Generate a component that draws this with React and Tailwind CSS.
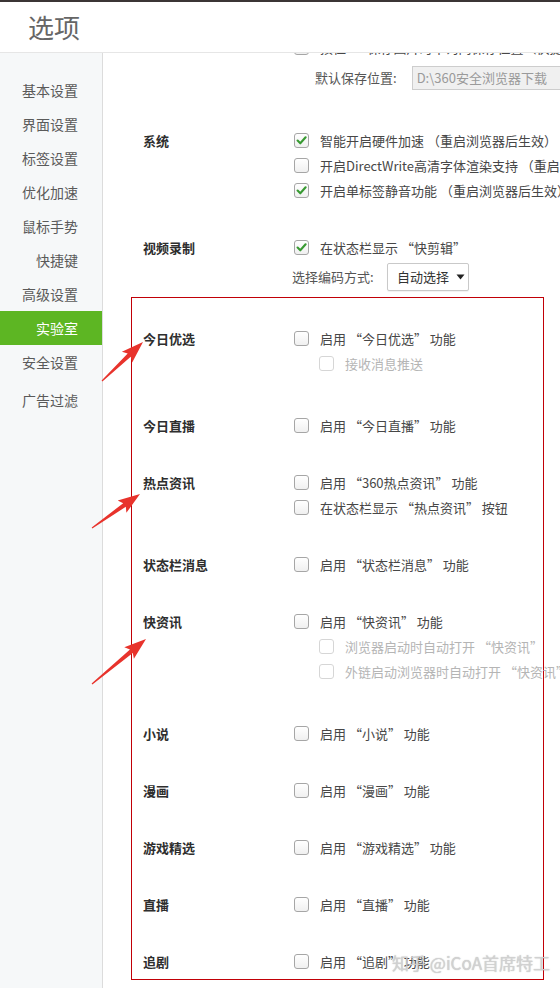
import React from "react";

function Box({ checked, disabled }) {
  return (
    <span
      className={`flex h-[15px] w-[15px] shrink-0 items-center justify-center rounded-[3px] border ${
        disabled ? "border-[#d6d6d6] bg-white" : "border-[#a6a6a6] bg-gradient-to-b from-white to-[#f0f0f0]"
      }`}
    >
      {checked && (
        <svg width="11" height="11" viewBox="0 0 11 11">
          <path d="M1.6 5.6 L4.3 8.3 L9.6 2.3" fill="none" stroke="#389a32" strokeWidth="2.1" strokeLinecap="round" strokeLinejoin="round" />
        </svg>
      )}
    </span>
  );
}

function Row({ checked, disabled, sub, children }) {
  return (
    <div
      className={`flex h-[25px] items-center whitespace-nowrap text-[13px] ${
        sub ? "pl-[25px] text-[#b5b5b5]" : "text-[#474747]"
      }`}
    >
      <Box checked={checked} disabled={disabled} />
      <span className="ml-[11px] leading-[25px]">{children}</span>
    </div>
  );
}

function Group({ label, className = "", children }) {
  return (
    <div className={`flex ${className}`}>
      <div className="flex h-[25px] w-[151px] shrink-0 items-center whitespace-nowrap text-[13px] font-bold text-[#2e2e2e]">
        {label}
      </div>
      <div className="flex flex-col">{children}</div>
    </div>
  );
}

function arrowPoints(tx, ty, hx, hy) {
  const len = Math.hypot(hx - tx, hy - ty);
  const dx = (hx - tx) / len;
  const dy = (hy - ty) / len;
  const nx = -dy;
  const ny = dx;
  const L = 21;
  const bx = hx - dx * L;
  const by = hy - dy * L;
  const p = (x, y) => `${x.toFixed(1)},${y.toFixed(1)}`;
  return [
    p(tx + nx * 0.6, ty + ny * 0.6),
    p(bx + nx * 2.2 + dx * 2, by + ny * 2.2 + dy * 2),
    p(bx + nx * 7.5 - dx * 1, by + ny * 7.5 - dy * 1),
    p(hx, hy),
    p(bx - nx * 7.5 - dx * 1, by - ny * 7.5 - dy * 1),
    p(bx - nx * 2.2 + dx * 2, by - ny * 2.2 + dy * 2),
    p(tx - nx * 0.6, ty - ny * 0.6),
  ].join(" ");
}

const NAV = ["基本设置", "界面设置", "标签设置", "优化加速", "鼠标手势", "快捷键", "高级设置"];

export default function App() {
  return (
    <div className="relative flex h-[988px] w-[560px] flex-col overflow-hidden bg-white font-['Noto_Sans_CJK_SC','Noto_Sans',sans-serif]">
      <div className="h-[2px] shrink-0 bg-[#3b3535]" />
      <header className="flex h-[51px] shrink-0 items-center border-b border-[#e6e6e6] pl-[28px] text-[26px] leading-none text-[#666]">
        选项
      </header>
      <div className="flex min-h-0 flex-1">
        <aside className="w-[103px] shrink-0 border-r border-[#dcdcdc] bg-[#f6f8f9] pt-[20px] text-[14px] text-[#5a5a5a]">
          {NAV.map((n) => (
            <div key={n} className="flex h-[34px] items-center justify-end pr-[24px]">
              {n}
            </div>
          ))}
          <div className="flex h-[34px] items-center justify-end bg-[#5db623] pr-[24px] text-white">实验室</div>
          <div className="flex h-[34px] items-center justify-end pr-[24px]">安全设置</div>
          <div className="mt-[4px] flex h-[34px] items-center justify-end pr-[24px]">广告过滤</div>
        </aside>
        <main className="min-w-0 flex-1 overflow-hidden">
          <div className="-mt-[18px] flex w-[600px] flex-col pl-[40px]">
            <Group label="">
              <Row>按住Ctrl保存图片时不询问保存位置（快捷键：</Row>
            </Group>
            <Group label="" className="mt-[5px]">
              <div className="flex h-[26px] items-center whitespace-nowrap pl-[21px] text-[13px] text-[#555]">
                <span>默认保存位置:</span>
                <span className="ml-[15px] flex h-[24px] w-[200px] items-center border border-[#cdcdcd] bg-[#f0f0f0] pl-[4px] text-[#9a9a9a]">
                  D:\360安全浏览器下载
                </span>
              </div>
            </Group>
            <Group label="系统" className="mt-[37px]">
              <Row checked>智能开启硬件加速 （重启浏览器后生效）</Row>
              <Row>开启DirectWrite高清字体渲染支持 （重启浏览器后生效）</Row>
              <Row checked>开启单标签静音功能 （重启浏览器后生效）</Row>
            </Group>
            <Group label="视频录制" className="mt-[32px]">
              <Row checked>在状态栏显示 “快剪辑”</Row>
              <div className="-ml-[2px] mt-[3px] flex h-[28px] items-center whitespace-nowrap text-[13px] text-[#555]">
                <span className="w-[95px]">选择编码方式:</span>
                <span className="flex h-[28px] w-[82px] items-center rounded-[2px] border border-[#c9c9c9] bg-white pl-[9px] text-[#333] shadow-[0_1px_1px_rgba(0,0,0,0.06)]">
                  自动选择
                  <svg className="ml-[7px]" width="9" height="6" viewBox="0 0 9 6">
                    <path d="M0.5 0.5 L8.5 0.5 L4.5 5.5 Z" fill="#222" />
                  </svg>
                </span>
              </div>
            </Group>
          </div>
          <div className="ml-[28px] mt-[6px] flex w-[413px] flex-col gap-[32px] border border-solid border-red-700 pb-[5px] pl-[11px] pt-[28px]">
            <Group label="今日优选" className="pb-[5px]">
              <Row>启用 “今日优选” 功能</Row>
              <Row sub disabled>接收消息推送</Row>
            </Group>
            <Group label="今日直播">
              <Row>启用 “今日直播” 功能</Row>
            </Group>
            <Group label="热点资讯">
              <Row>启用 “360热点资讯” 功能</Row>
              <Row>在状态栏显示 “热点资讯” 按钮</Row>
            </Group>
            <Group label="状态栏消息">
              <Row>启用 “状态栏消息” 功能</Row>
            </Group>
            <Group label="快资讯" className="pb-[5px]">
              <Row>启用 “快资讯” 功能</Row>
              <Row sub disabled>浏览器启动时自动打开 “快资讯”</Row>
              <Row sub disabled>外链启动浏览器时自动打开 “快资讯”</Row>
            </Group>
            <Group label="小说">
              <Row>启用 “小说” 功能</Row>
            </Group>
            <Group label="漫画">
              <Row>启用 “漫画” 功能</Row>
            </Group>
            <Group label="游戏精选">
              <Row>启用 “游戏精选” 功能</Row>
            </Group>
            <Group label="直播">
              <Row>启用 “直播” 功能</Row>
            </Group>
            <Group label="追剧">
              <Row>启用 “追剧” 功能</Row>
            </Group>
          </div>
        </main>
      </div>

      <svg className="pointer-events-none absolute left-0 top-0" width="560" height="988">
        <polygon points={arrowPoints(102, 381, 143, 342)} fill="#e8332c" />
        <polygon points={arrowPoints(92, 528, 140, 494)} fill="#e8332c" />
        <polygon points={arrowPoints(92, 684, 146, 639)} fill="#e8332c" />
      </svg>

      <div className="pointer-events-none absolute left-[392px] top-[952px] whitespace-nowrap text-[17px] leading-[22px] text-[#d4d4d4]/90 [text-shadow:0_0_1px_rgba(110,110,110,0.5)]">
        知乎 @iCoA首席特工
      </div>
    </div>
  );
}
